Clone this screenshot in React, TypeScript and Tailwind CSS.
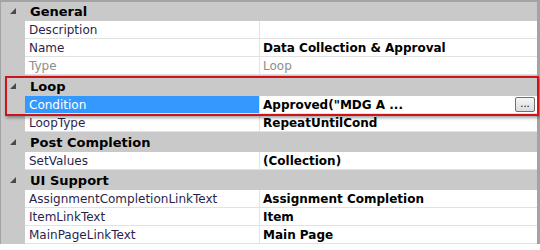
type Prop = { name: string; value: string; readOnly?: boolean; selected?: boolean; button?: boolean };
type Group = { title: string; gapTop: string; props: Prop[] };

const groups: Group[] = [
  {
    title: "General",
    gapTop: "mt-0",
    props: [
      { name: "Description", value: "" },
      { name: "Name", value: "Data Collection & Approval" },
      { name: "Type", value: "Loop", readOnly: true },
    ],
  },
  {
    title: "Loop",
    gapTop: "mt-[2px]",
    props: [
      { name: "Condition", value: 'Approved("MDG A ...', selected: true, button: true },
      { name: "LoopType", value: "RepeatUntilCond" },
    ],
  },
  {
    title: "Post Completion",
    gapTop: "mt-[1px]",
    props: [{ name: "SetValues", value: "(Collection)" }],
  },
  {
    title: "UI Support",
    gapTop: "mt-[1px]",
    props: [
      { name: "AssignmentCompletionLinkText", value: "Assignment Completion" },
      { name: "ItemLinkText", value: "Item" },
      { name: "MainPageLinkText", value: "Main Page" },
    ],
  },
];

function Expander() {
  return (
    <svg width="7" height="7" viewBox="0 0 7 7" className="block">
      <polygon points="6,0 6,6 0,6" fill="#4a4a4a" />
    </svg>
  );
}

export default function App() {
  return (
    <div
      className="relative w-[540px] h-[250px] bg-white overflow-hidden text-[12px] leading-none"
      style={{ fontFamily: "Tahoma, 'DejaVu Sans', sans-serif" }}
    >
      <div className="flex flex-col border-t-2 border-l border-r-[3px] border-[#a3a3a3] bg-[#c9c9c9]">
        {groups.map((g) => (
          <div key={g.title} className={"flex flex-col " + g.gapTop}>
            {/* category header */}
            <div className="flex h-[19px] items-center">
              <div className="flex w-[24px] shrink-0 justify-center pl-[1px]">
                <Expander />
              </div>
              <span className="pl-[5px] font-bold text-black text-[13px]">{g.title}</span>
            </div>
            {g.props.map((p) => (
              <div key={p.name} className="flex h-[18px]">
                <div className="w-[24px] shrink-0" />
                <div
                  className={
                    "flex w-[234px] shrink-0 items-center pl-[4px] border-b border-[#e2e2e2] " +
                    (p.selected
                      ? "bg-[#3399ff] text-white"
                      : p.readOnly
                      ? "bg-white text-[#8d8d8d]"
                      : "bg-white text-[#2b1f4d]")
                  }
                >
                  {p.name}
                </div>
                <div className="w-[1px] shrink-0 bg-[#e2e2e2]" />
                <div
                  className={
                    "flex flex-1 items-center justify-between pl-[3px] pr-[2px] bg-white border-b border-[#e2e2e2] " +
                    (p.readOnly ? "text-[#8d8d8d]" : "font-bold text-black")
                  }
                >
                  <span>{p.value}</span>
                  {p.button && (
                    <span className="flex h-[15px] w-[20px] items-end justify-center rounded-[2px] border border-[#707070] bg-gradient-to-b from-[#f6f6f6] to-[#dcdcdc] pb-[2px] text-[10px] font-normal text-black">
                      ...
                    </span>
                  )}
                </div>
              </div>
            ))}
          </div>
        ))}
      </div>
      {/* highlight annotation */}
      <div className="absolute left-[5px] top-[76px] w-[534px] h-[40px] border-2 border-[#d0121b] shadow-[1px_2px_3px_rgba(0,0,0,0.35)] pointer-events-none" />
    </div>
  );
}
